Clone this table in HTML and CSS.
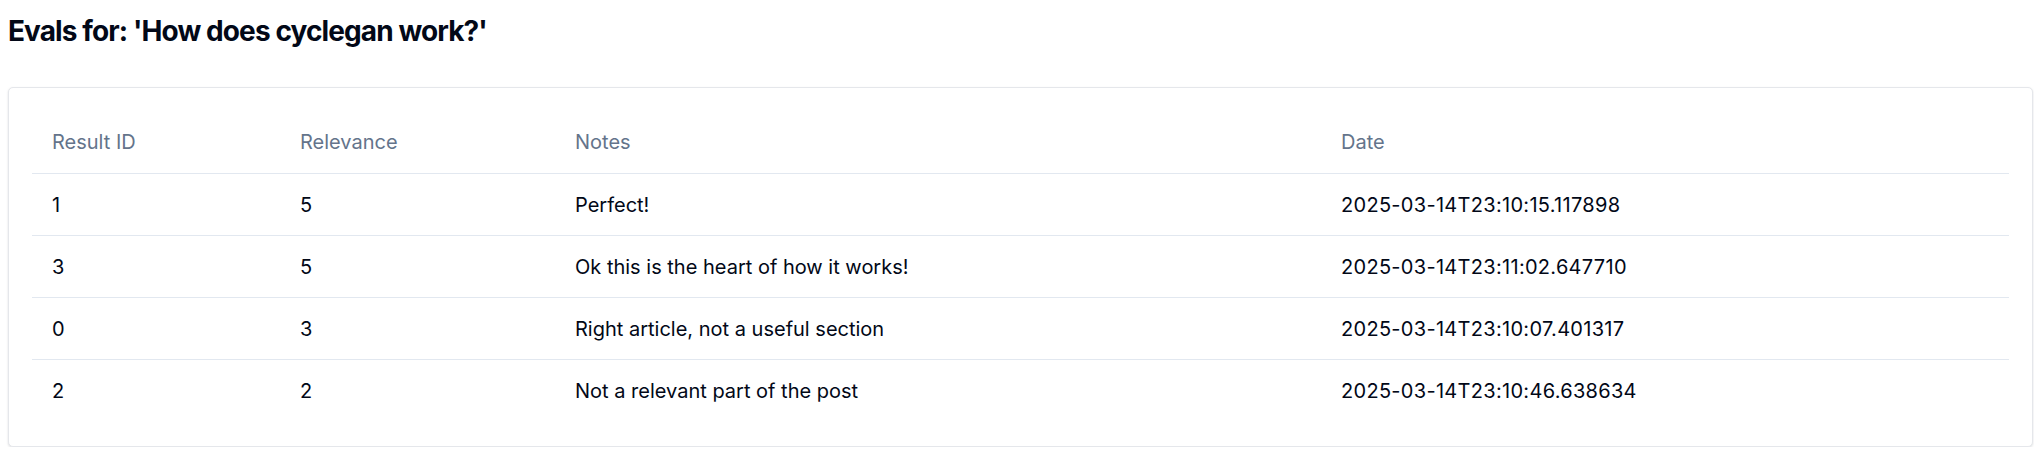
FILE: index.html
```html
<!DOCTYPE html>
<html lang="en">
<head>
<meta charset="utf-8">
<title>Evals</title>
<link rel="stylesheet" href="styles.css">
</head>
<body>
<main class="page">
  <h1 class="title">Evals for: 'How does cyclegan work?'</h1>
  <section class="card">
    <table class="evals">
      <colgroup>
        <col class="c-id">
        <col class="c-rel">
        <col class="c-notes">
        <col class="c-date">
      </colgroup>
      <thead>
        <tr><th>Result ID</th><th>Relevance</th><th>Notes</th><th>Date</th></tr>
      </thead>
      <tbody>
        <tr><td>1</td><td>5</td><td>Perfect!</td><td class="date">2025-03-14T23:10:15.117898</td></tr>
        <tr><td>3</td><td>5</td><td>Ok this is the heart of how it works!</td><td class="date">2025-03-14T23:11:02.647710</td></tr>
        <tr><td>0</td><td>3</td><td>Right article, not a useful section</td><td class="date">2025-03-14T23:10:07.401317</td></tr>
        <tr><td>2</td><td>2</td><td>Not a relevant part of the post</td><td class="date">2025-03-14T23:10:46.638634</td></tr>
      </tbody>
    </table>
  </section>
</main>
</body>
</html>
```
FILE: styles.css
```css
html, body {
  margin: 0;
  padding: 0;
  background: #ffffff;
}
body {
  font-family: Inter, "Noto Sans", "Liberation Sans", sans-serif;
  color: #020817;
}
.page {
  padding: 13px 1px 0 8px;
}
.title {
  margin: 0 0 38px;
  font-size: 28px;
  line-height: 36px;
  font-weight: 700;
  letter-spacing: -0.032em;
  color: #020817;
}
.card {
  border: 1px solid #e5e7eb;
  border-radius: 5px;
  padding: 23px 23px 25px;
  box-shadow: 0 1px 3px rgba(15, 23, 42, 0.08), 0 1px 2px rgba(15, 23, 42, 0.05);
  background: #fff;
}
.evals {
  width: 100%;
  border-collapse: collapse;
  table-layout: fixed;
  font-size: 20px;
}
.c-id { width: 248px; }
.c-rel { width: 275px; }
.c-notes { width: 766px; }
.evals th {
  height: 62px;
  padding: 0 20px;
  text-align: left;
  vertical-align: middle;
  font-weight: 400;
  color: #64748b;
  border-bottom: 1px solid #e2e8f0;
}
.evals td {
  height: 61px;
  padding: 0 20px;
  vertical-align: middle;
  color: #020817;
  border-bottom: 1px solid #e2e8f0;
}
.evals td.date {
  letter-spacing: 0.015em;
}
.evals tbody tr:last-child td {
  border-bottom: none;
}
```
